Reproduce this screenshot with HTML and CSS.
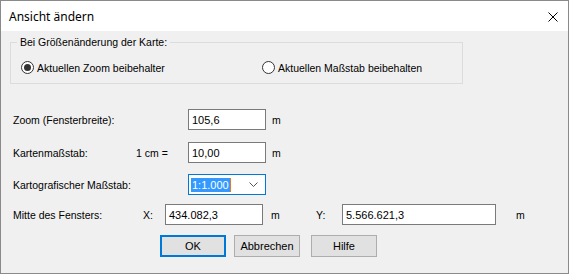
FILE: index.html
```html
<!DOCTYPE html>
<html lang="de">
<head>
<meta charset="utf-8">
<title>Ansicht ändern</title>
<link rel="stylesheet" href="styles.css">
</head>
<body>
<div class="window">
  <div class="titlebar">
    <span class="title">Ansicht ändern</span>
    <svg class="close" width="10" height="10" viewBox="0 0 10 10"><path d="M0.5 0.5 L9.5 9.5 M9.5 0.5 L0.5 9.5" stroke="#000" stroke-width="1" fill="none"/></svg>
  </div>
  <div class="content">
    <div class="group">
      <span class="group-label">Bei Größenänderung der Karte:</span>
      <div class="radios">
        <label class="radio radio-zoom"><span class="circle checked"></span>Aktuellen Zoom beibehalter</label>
        <label class="radio radio-scale"><span class="circle"></span>Aktuellen Maßstab beibehalten</label>
      </div>
    </div>

    <div class="row row-zoom">
      <span class="lbl">Zoom (Fensterbreite):</span>
      <span class="field">105,6</span>
      <span class="unit">m</span>
    </div>

    <div class="row row-karte">
      <span class="lbl">Kartenmaßstab:</span>
      <span class="lbl">1 cm =</span>
      <span class="field">10,00</span>
      <span class="unit">m</span>
    </div>

    <div class="row row-carto">
      <span class="lbl">Kartografischer Maßstab:</span>
      <span class="combo"><span class="sel">1:1.000</span><span class="caret"></span>
        <svg class="chev" width="9" height="5" viewBox="0 0 9 5"><path d="M0.5 0.5 L4.5 4.5 L8.5 0.5" stroke="#555" stroke-width="1" fill="none"/></svg>
      </span>
    </div>

    <div class="row row-mitte">
      <span class="lbl">Mitte des Fensters:</span>
      <span class="lbl">X:</span>
      <span class="field">434.082,3</span>
      <span class="unit unit-x">m</span>
      <span class="lbl">Y:</span>
      <span class="field">5.566.621,3</span>
      <span class="unit unit-y">m</span>
    </div>

    <div class="buttons">
      <span class="btn btn-default">OK</span>
      <span class="btn">Abbrechen</span>
      <span class="btn btn-help">Hilfe</span>
    </div>
  </div>
</div>
</body>
</html>
```
FILE: styles.css
```css
html, body {
  margin: 0;
  padding: 0;
  background: #f0f0f0;
}
.window {
  width: 569px;
  height: 274px;
  box-sizing: border-box;
  border: 1px solid #8a8a8a;
  background: #f0f0f0;
  display: flex;
  flex-direction: column;
  font-family: "Liberation Sans", Arial, sans-serif;
  font-size: 10.5px;
  color: #000;
}
.titlebar {
  height: 30px;
  background: #fff;
  display: flex;
  align-items: center;
  justify-content: space-between;
  padding: 0 10px 0 8px;
  flex: none;
}
.title {
  font-family: "Noto Sans", "Open Sans", sans-serif;
  font-size: 12px;
  color: #000;
}
.close {
  display: block;
  margin-top: 1px;
}
.content {
  flex: 1;
  display: flex;
  flex-direction: column;
  padding-left: 12px;
}
.group {
  position: relative;
  margin: 11px 0 0 -3px;
  width: 453px;
  height: 42px;
  box-sizing: border-box;
  border: 1px solid #dcdcdc;
  padding: 18px 0 0 10px;
}
.group-label {
  position: absolute;
  left: 6px;
  top: -7px;
  padding: 0 3px;
  background: #f0f0f0;
  line-height: 13px;
}
.radios {
  display: flex;
}
.radio {
  display: flex;
  align-items: center;
  height: 13px;
}
.radio-zoom {
  width: 241px;
}
.circle {
  width: 13px;
  height: 13px;
  box-sizing: border-box;
  border: 1px solid #333;
  border-radius: 50%;
  background: #fff;
  margin-right: 3px;
  display: flex;
  align-items: center;
  justify-content: center;
}
.circle.checked::after {
  content: "";
  width: 7px;
  height: 7px;
  border-radius: 50%;
  background: #333;
}
.row {
  display: grid;
  align-items: center;
  height: 21px;
}
.row-zoom {
  margin-top: 25px;
  grid-template-columns: 175px 78px 20px;
}
.row-zoom .unit, .row-karte .unit {
  padding-left: 6px;
}
.row-karte {
  margin-top: 12px;
  grid-template-columns: 123px 52px 78px 20px;
}
.row-carto {
  margin-top: 11px;
  grid-template-columns: 175px 78px;
}
.row-mitte {
  margin-top: 9px;
  grid-template-columns: 130px 22px 98px 53px 26px 154px 30px;
}
.unit-x {
  padding-left: 8px;
}
.unit-y {
  padding-left: 20px;
}
.field {
  height: 21px;
  box-sizing: border-box;
  border: 1px solid #7a7a7a;
  background: #fff;
  display: flex;
  align-items: center;
  padding-left: 3px;
  font-size: 11px;
}
.combo {
  height: 21px;
  box-sizing: border-box;
  border: 1px solid #0078d7;
  background: #fff;
  display: flex;
  align-items: center;
  padding-left: 2px;
  font-size: 11px;
}
.sel {
  background: #3399ff;
  color: #fff;
  line-height: 14px;
  padding: 0 1px;
}
.caret {
  width: 1px;
  height: 14px;
  background: #e8782a;
}
.chev {
  margin-left: auto;
  margin-right: 7px;
}
.buttons {
  display: flex;
  margin-top: 10px;
  padding-left: 147px;
  gap: 8px;
}
.btn {
  width: 66px;
  height: 22px;
  box-sizing: border-box;
  border: 1px solid #adadad;
  background: #e1e1e1;
  display: flex;
  align-items: center;
  justify-content: center;
  font-size: 11px;
}
.btn-help {
  margin-left: 3px;
}
.btn-default {
  border: 2px solid #0078d7;
}
```
